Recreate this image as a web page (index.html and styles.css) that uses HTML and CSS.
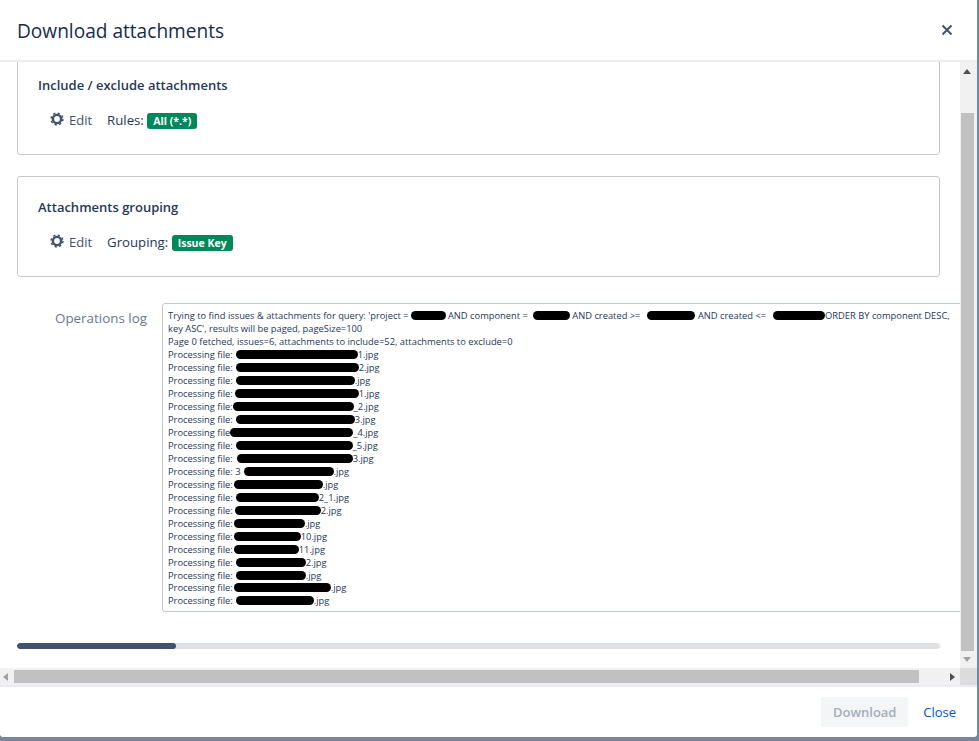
FILE: index.html
```html
<!DOCTYPE html>
<html lang="en">
<head>
<meta charset="utf-8">
<title>Download attachments</title>
<link rel="stylesheet" href="styles.css">
</head>
<body>
<div class="modal">
  <header class="modal-header">
    <h1 class="modal-title">Download attachments</h1>
    <svg class="close-icon" viewBox="0 0 12 12" width="12" height="12"><path d="M1.5 1.5l9 9M10.5 1.5l-9 9"/></svg>
  </header>
  <div class="modal-main">
    <div class="top-row">
      <div class="viewport">
        <div class="content">
          <section class="card">
            <h2 class="card-title">Include / exclude attachments</h2>
            <div class="card-row">
              <svg class="gear" viewBox="0 0 16 16" width="14" height="14"><circle class="gear-teeth" cx="8" cy="8" r="6.8"/><circle class="gear-ring" cx="8" cy="8" r="4.7"/></svg>
              <span class="edit">Edit</span>
              <span class="field-label">Rules:</span>
              <span class="badge">All (*.*)</span>
            </div>
          </section>
          <section class="card">
            <h2 class="card-title">Attachments grouping</h2>
            <div class="card-row">
              <svg class="gear" viewBox="0 0 16 16" width="14" height="14"><circle class="gear-teeth" cx="8" cy="8" r="6.8"/><circle class="gear-ring" cx="8" cy="8" r="4.7"/></svg>
              <span class="edit">Edit</span>
              <span class="field-label">Grouping:</span>
              <span class="badge">Issue Key</span>
            </div>
          </section>
          <div class="log-row">
            <div class="log-label">Operations log</div>
            <div class="log-box">
              <div class="line">Trying to find issues &amp; attachments for query: 'project =<i class="r" style="width:35px;margin-left:2px"></i> AND component =<i class="r" style="width:37px;margin-left:5px"></i> AND created &gt;=<i class="r" style="width:48px;margin-left:7px"></i> AND created &lt;=<i class="r" style="width:52px;margin-left:7px"></i>ORDER BY component DESC,</div>
              <div class="line">key ASC', results will be paged, pageSize=100</div>
              <div class="line">Page 0 fetched, issues=6, attachments to include=52, attachments to exclude=0</div>
              <div class="line">Processing file:<i class="r" style="width:122px;margin-left:3px"></i>1.jpg</div>
              <div class="line">Processing file:<i class="r" style="width:123px;margin-left:3px"></i>2.jpg</div>
              <div class="line">Processing file:<i class="r" style="width:119px;margin-left:3px"></i>.jpg</div>
              <div class="line">Processing file:<i class="r" style="width:124px;margin-left:2px"></i>1.jpg</div>
              <div class="line">Processing file:<i class="r" style="width:121px"></i>_2.jpg</div>
              <div class="line">Processing file:<i class="r" style="width:119px;margin-left:3px"></i>3.jpg</div>
              <div class="line">Processing file<i class="r" style="width:123px"></i>_4.jpg</div>
              <div class="line">Processing file:<i class="r" style="width:117px;margin-left:3px"></i>_5.jpg</div>
              <div class="line">Processing file:<i class="r" style="width:116px;margin-left:4px"></i>3.jpg</div>
              <div class="line">Processing file: 3<i class="r" style="width:90px;margin-left:3px"></i>.jpg</div>
              <div class="line">Processing file:<i class="r" style="width:89px;margin-left:1px"></i>.jpg</div>
              <div class="line">Processing file:<i class="r" style="width:83px;margin-left:3px"></i>2_1.jpg</div>
              <div class="line">Processing file:<i class="r" style="width:86px;margin-left:2px"></i>2.jpg</div>
              <div class="line">Processing file:<i class="r" style="width:71px;margin-left:1px"></i>.jpg</div>
              <div class="line">Processing file:<i class="r" style="width:67px;margin-left:1px"></i>10.jpg</div>
              <div class="line">Processing file:<i class="r" style="width:65px;margin-left:1px"></i>11.jpg</div>
              <div class="line">Processing file:<i class="r" style="width:70px;margin-left:3px"></i>2.jpg</div>
              <div class="line line-tight">Processing file:<i class="r" style="width:70px;margin-left:3px"></i>.jpg</div>
              <div class="line">Processing file:<i class="r" style="width:97px;margin-left:1px"></i>.jpg</div>
              <div class="line">Processing file:<i class="r" style="width:78px;margin-left:3px"></i>.jpg</div>
            </div>
          </div>
          <div class="progress"><div class="progress-fill"></div></div>
        </div>
      </div>
      <div class="vbar">
        <svg class="arrow" viewBox="0 0 8 5" width="8" height="5"><path class="arrow-dark" d="M4 0l4 5H0z"/></svg>
        <div class="vthumb"></div>
        <svg class="arrow" viewBox="0 0 8 5" width="8" height="5"><path class="arrow-light" d="M0 0h8L4 5z"/></svg>
      </div>
    </div>
    <div class="bottom-row">
      <div class="hbar">
        <svg class="arrow" viewBox="0 0 5 8" width="5" height="8"><path class="arrow-light" d="M5 0v8L0 4z"/></svg>
        <div class="hthumb"></div>
        <svg class="arrow arrow-right" viewBox="0 0 5 8" width="5" height="8"><path class="arrow-dark" d="M0 0l5 4-5 4z"/></svg>
      </div>
      <div class="corner"></div>
    </div>
  </div>
  <footer class="modal-footer">
    <button class="btn-download" type="button" disabled>Download</button>
    <a class="btn-close">Close</a>
  </footer>
</div>
</body>
</html>
```
FILE: styles.css
```css
* { box-sizing: border-box; }
html, body { margin: 0; height: 741px; overflow: hidden; }
body {
  background: #7a869a;
  font-family: "Open Sans", "Noto Sans", sans-serif;
  color: #172b4d;
}
.modal {
  width: 977px;
  height: 737px;
  background: #fff;
  border-radius: 0 0 3px 3px;
  display: flex;
  flex-direction: column;
}
.modal-header {
  height: 60px;
  flex: none;
  display: flex;
  align-items: center;
  justify-content: space-between;
  padding: 1px 24px 0 17px;
}
.modal-title {
  margin: 0;
  font-size: 19.1px;
  font-weight: 500;
  color: #172b4d;
}
.close-icon { margin-top: -1px; }
.close-icon path { fill: none; stroke: #42526e; stroke-width: 2; }
.modal-main { flex: none; height: 625px; display: flex; flex-direction: column; border-top: 2px solid #ebecf0; }
.top-row { display: flex; height: 606px; }
.viewport { width: 960px; height: 606px; overflow: hidden; }
.content { padding: 0 20px 0 17px; margin-top: -8px; width: 960px; }
.card {
  height: 101px;
  width: 923px;
  border: 1px solid #c8c9cc;
  border-radius: 3px;
  padding: 21px 20px 0;
  margin-bottom: 21px;
}
.card-title {
  margin: 0;
  font-size: 13px;
  font-weight: 600;
  line-height: 18px;
  color: #253858;
}
.card-row {
  display: flex;
  align-items: center;
  margin-top: 16px;
  padding-left: 12px;
  height: 20px;
  font-size: 13px;
  color: #42526e;
}
.gear { flex: none; margin-top: -3px; }
.gear-teeth { fill: none; stroke: #42526e; stroke-width: 1.6; stroke-dasharray: 2.6 2.74; }
.gear-ring { fill: none; stroke: #42526e; stroke-width: 2.8; }
.edit { margin-left: 5px; }
.field-label { margin-left: 15px; font-size: 13.2px; color: #253858; }
.badge {
  margin: 2px 0 0 3.5px;
  background: #00875a;
  color: #fff;
  font-weight: 700;
  font-size: 10.5px;
  line-height: 16px;
  height: 16px;
  padding: 0 6px;
  border-radius: 3px;
}
.log-row { display: flex; margin-top: 26px; }
.log-label {
  flex: none;
  width: 130px;
  text-align: right;
  font-size: 13.4px;
  line-height: 18px;
  padding-top: 6px;
  color: #6b778c;
}
.log-box {
  flex: none;
  width: 830px;
  height: 309px;
  margin-left: 15px;
  padding: 5px;
  border: 1px solid #c1c7d0;
  border-radius: 3px 0 0 3px;
  font-size: 9.34px;
  line-height: 13px;
  color: #253858;
}
.line { white-space: nowrap; height: 13px; }
.line-tight { height: 12px; }
.r {
  display: inline-block;
  height: 9px;
  background: #000;
  border-radius: 5px;
  vertical-align: -1px;
}
.progress {
  width: 923px;
  height: 6px;
  margin-top: 31px;
  background: #dfe1e6;
  border-radius: 3px;
  overflow: hidden;
}
.progress-fill { width: 159px; height: 6px; background: #42526e; border-radius: 3px; }
.vbar {
  width: 17px;
  height: 606px;
  background: #f1f1f1;
  display: flex;
  flex-direction: column;
  align-items: center;
  padding-top: 7px;
}
.vbar .arrow { flex: none; margin-left: -3px; }
.vthumb { width: 13px; height: 538px; margin: 39px 2px 6px 0; background: #c1c1c1; flex: none; }
.arrow-dark { fill: #505050; }
.arrow-light { fill: #a3a3a3; }
.bottom-row { display: flex; height: 17px; }
.hbar {
  width: 960px;
  height: 17px;
  background: #f1f1f1;
  display: flex;
  align-items: center;
  padding-left: 3px;
}
.hbar .arrow { flex: none; }
.hthumb { width: 905px; height: 13px; margin-left: 6px; background: #c1c1c1; flex: none; }
.arrow-right { margin-left: 31px; }
.corner { width: 17px; height: 17px; background: #dcdcdc; }
.modal-footer {
  flex: none;
  height: 52px;
  border-top: 2px solid #ebecf0;
  display: flex;
  align-items: center;
  justify-content: flex-end;
  padding-right: 21px;
}
.btn-download {
  width: 87px;
  height: 30px;
  border: 0;
  border-radius: 3px;
  background: #f4f5f7;
  color: #a5adba;
  font: 600 13px "Open Sans", "Noto Sans", sans-serif;
}
.btn-close { margin-left: 15px; font-size: 13px; color: #0052cc; }
```
